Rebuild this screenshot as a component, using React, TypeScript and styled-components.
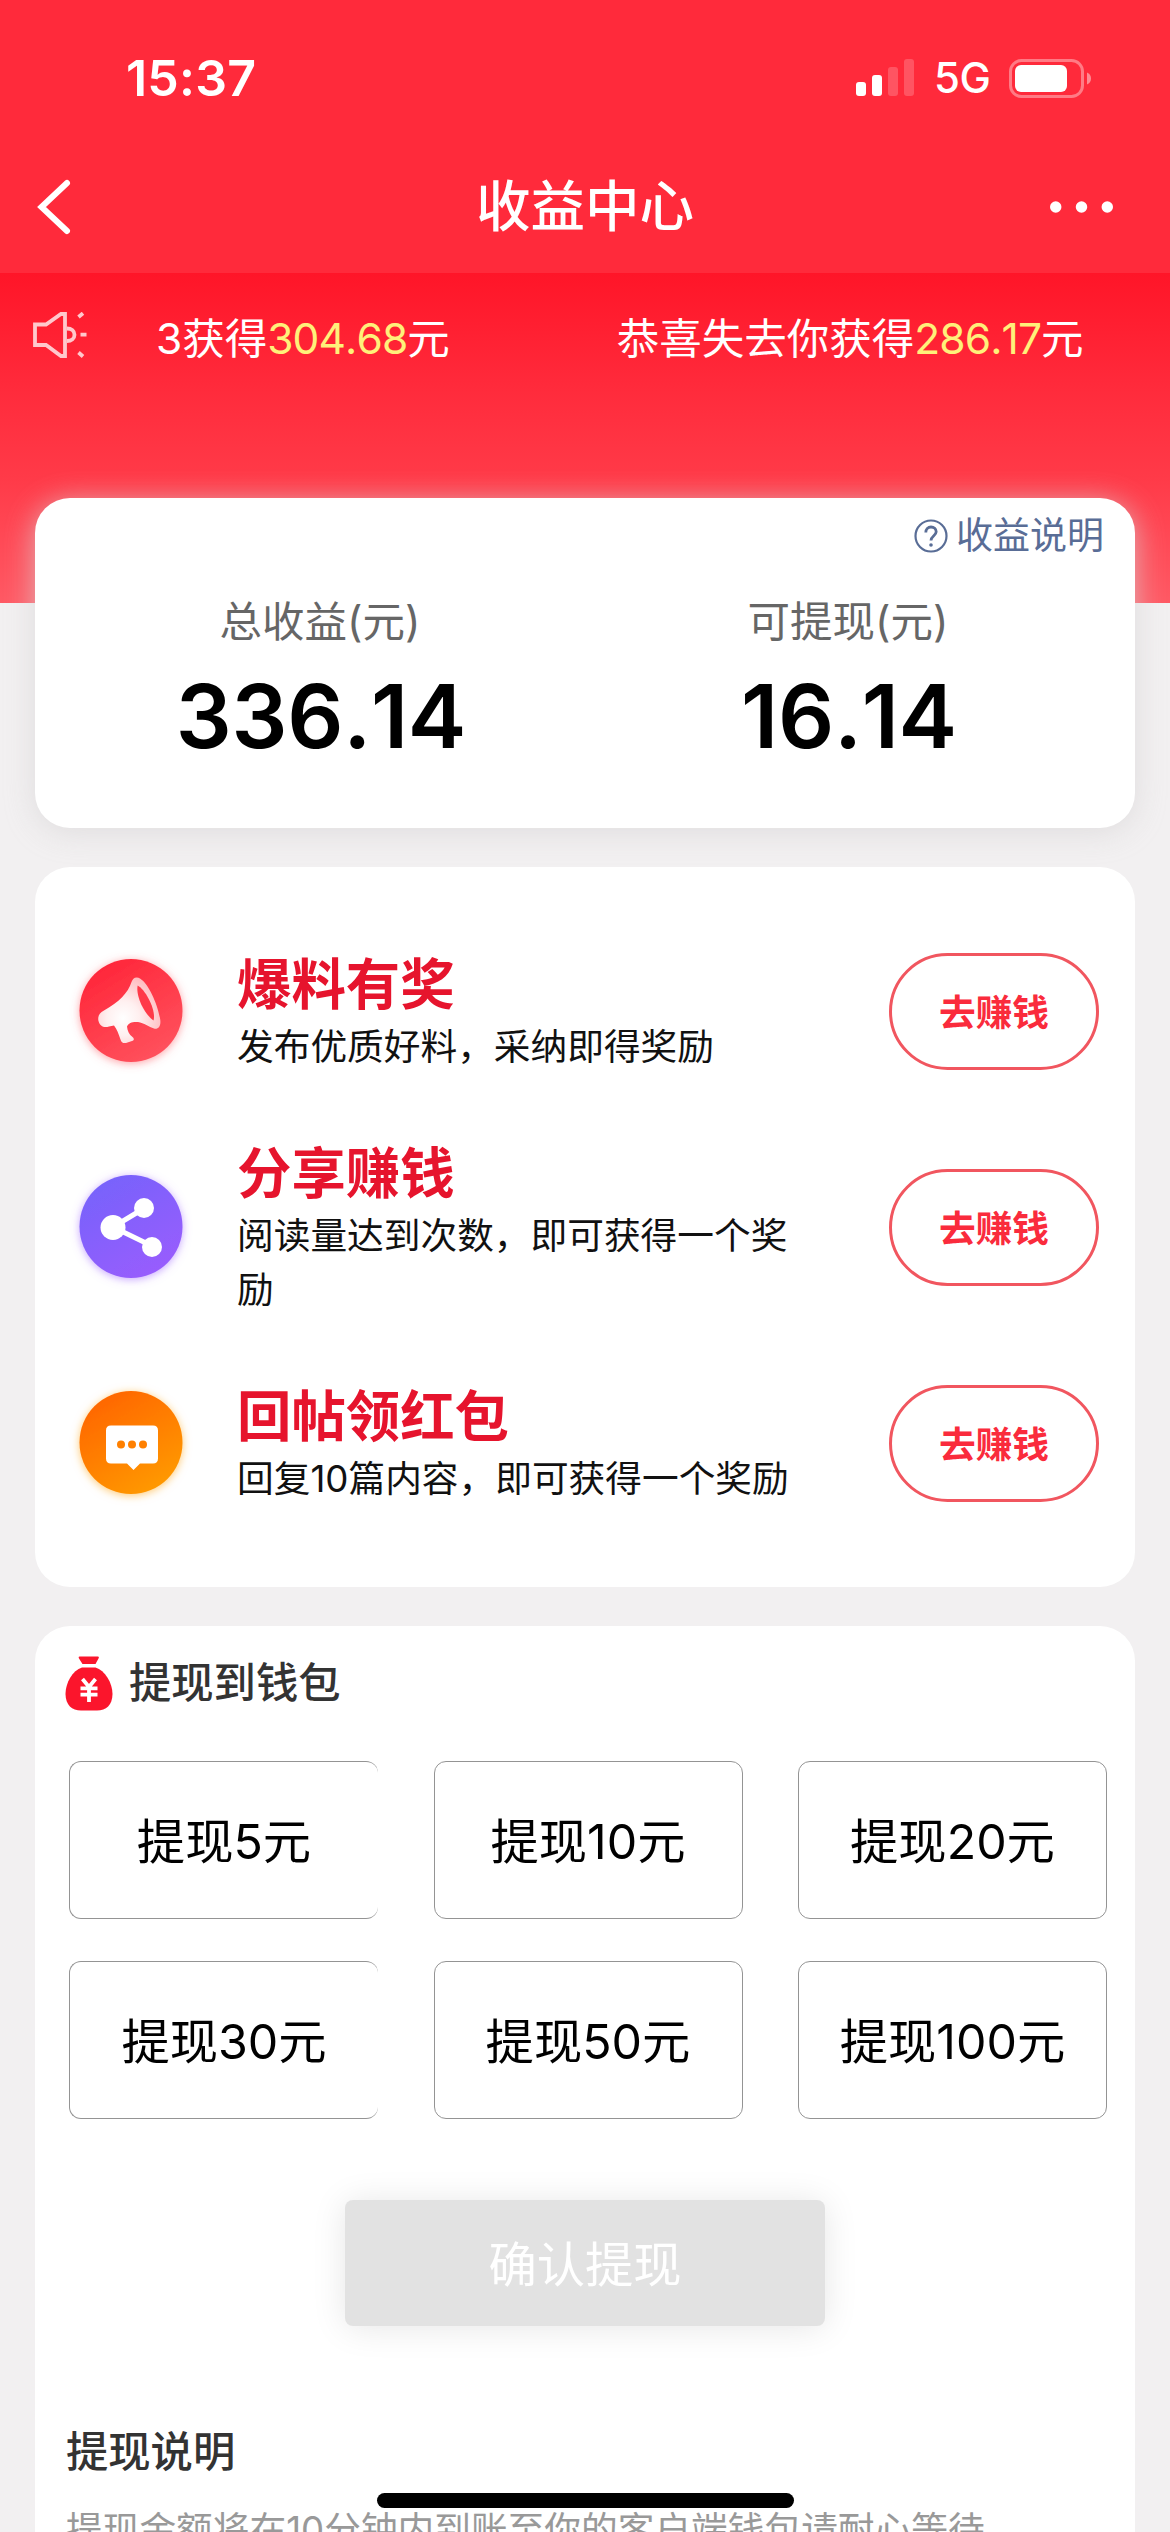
import React from "react";
import styled, { createGlobalStyle, css } from "styled-components";

const GlobalStyle = createGlobalStyle`
  html, body { margin: 0; padding: 0; }
  body { width: 1170px; height: 2532px; overflow: hidden; background: #f2f0f1; }
  * { box-sizing: border-box; }
  button { font: inherit; margin: 0; padding: 0; cursor: pointer; }
`;

const Screen = styled.div`
  position: relative;
  display: flex;
  flex-direction: column;
  width: 1170px;
  height: 2532px;
  overflow: hidden;
  background: #f2f0f1;
  font-family: Inter, "Noto Sans CJK SC", sans-serif;
  color: #000;
`;

const StatusBar = styled.header`
  display: flex;
  align-items: center;
  justify-content: space-between;
  height: 141px;
  padding: 15px 79px 0 126px;
  flex: none;
  background: #ff2a3b;
  color: #fff;
`;

const Clock = styled.time`
  font-size: 50px;
  font-weight: 600;
  line-height: 60px;
  letter-spacing: 0.2px;
`;

const StatusIcons = styled.div`
  display: flex;
  align-items: center;
`;

const Network = styled.span`
  width: 75px;
  padding-left: 19px;
  box-sizing: content-box;
  font-size: 42px;
  font-weight: 500;
  line-height: 60px;
  letter-spacing: -0.5px;
`;

const NavBar = styled.nav`
  display: grid;
  grid-template-columns: 120px 1fr 120px;
  align-items: center;
  height: 132px;
  flex: none;
  background: #ff2a3b;
  color: #fff;
`;

const IconButton = styled.button<{ $end?: boolean }>`
  display: flex;
  border: 0;
  background: none;
  justify-content: ${(p) => (p.$end ? "flex-end" : "flex-start")};
  padding: ${(p) => (p.$end ? "0 57px 0 0" : "0 0 0 36px")};
`;

const NavTitle = styled.h1`
  margin: 0 0 2px;
  font-size: 54.5px;
  font-weight: 500;
  line-height: 80px;
  text-align: center;
`;

const Banner = styled.section`
  height: 330px;
  flex: none;
  padding: 28px 0 0 32px;
  background: linear-gradient(180deg, #ff1528 0%, #ff2a3b 34%, #ff3a48 62%, #ff5964 100%);
  color: #fff;
`;

const Notice = styled.div`
  display: flex;
  align-items: center;
  height: 76px;
  font-size: 42.5px;
  line-height: 76px;
  white-space: nowrap;
  font-kerning: none;
`;

const NoticeIcon = styled.span`
  display: flex;
  margin-bottom: 9px;
`;

const NoticeItem = styled.span<{ $gap: number }>`
  margin-left: ${(p) => p.$gap}px;
`;

const Gold = styled.em`
  font-style: normal;
  color: #fff07a;
  letter-spacing: -0.9px;
`;

const Content = styled.main`
  display: flex;
  flex-direction: column;
  gap: 39px;
  margin-top: -105px;
  padding: 0 35px;
`;

const Card = styled.section`
  flex: none;
  border-radius: 35px;
  background: #fff;
`;

const SummaryCard = styled(Card)`
  display: flex;
  flex-direction: column;
  height: 330px;
  box-shadow: 0 4px 30px rgba(216, 213, 215, 0.75);
`;

const HelpLink = styled.a`
  display: flex;
  align-items: center;
  align-self: flex-end;
  gap: 8px;
  height: 76px;
  padding: 0 31px 0 0;
  color: #596d96;
  font-size: 37px;
  line-height: 56px;
`;

const Stats = styled.div`
  display: grid;
  grid-template-columns: 1fr 1fr;
  padding: 16px 23px 0 21px;
`;

const Stat = styled.div`
  display: flex;
  flex-direction: column;
  align-items: center;
`;

const StatLabel = styled.span`
  font-size: 42.5px;
  line-height: 64px;
  color: #666;
`;

const StatValue = styled.strong`
  padding-left: 2px;
  font-size: 88px;
  font-weight: 600;
  line-height: 106px;
  margin-top: 9px;
  letter-spacing: -0.3px;
  font-kerning: none;
`;

const TaskCard = styled(Card)`
  height: 720px;
  padding: 36px 36px 0 36px;
`;

const TaskRow = styled.article`
  display: flex;
  align-items: center;
  height: 216px;
`;

const TaskIcon = styled.svg`
  width: 120px;
  height: 120px;
  flex: none;
  overflow: visible;
`;

const TaskText = styled.div`
  width: 568px;
  margin-left: 46px;
`;

const TaskTitle = styled.h2`
  margin: 0;
  font-size: 54.4px;
  font-weight: 700;
  line-height: 70px;
  padding-bottom: 1px;
  color: #e6142d;
`;

const TaskDesc = styled.p`
  margin: 0;
  font-size: 36.7px;
  line-height: 54px;
  color: #111;
  word-break: break-all;
`;

const EarnButton = styled.button`
  width: 210px;
  height: 117px;
  margin-left: auto;
  padding-bottom: 2px;
  border: 3px solid #f1565f;
  border-radius: 59px;
  background: #fff;
  color: #fa2b3c;
  font-size: 36.7px;
  font-weight: 700;
`;

const WalletCard = styled(Card)`
  height: 1000px;
  padding: 24px 28px 0 30px;
`;

const SectionTitle = styled.h3`
  display: flex;
  align-items: center;
  gap: 16px;
  margin: 0;
  height: 66px;
  font-size: 42.3px;
  font-weight: 500;
  line-height: 66px;
  color: #333;
`;

const AmountGrid = styled.div`
  display: grid;
  grid-template-columns: repeat(3, 309px);
  justify-content: space-between;
  row-gap: 42px;
  padding-left: 4px;
  margin-top: 45px;
`;

const AmountButton = styled.button<{ $openRight: boolean }>`
  height: 158px;
  padding-bottom: 5px;
  border: 1px solid #949494;
  border-radius: 12px;
  background: #fff;
  color: #000;
  font-size: 48.3px;
  ${(p) =>
    p.$openRight &&
    css`
      border-right: 0;
    `}
`;

const ConfirmButton = styled.button`
  display: block;
  width: 480px;
  height: 126px;
  margin: 81px 0 0 280px;
  padding-bottom: 4px;
  border: 0;
  border-radius: 8px;
  background: #e2e2e2;
  box-shadow: 0 2px 34px rgba(0, 0, 0, 0.1);
  color: #fff;
  font-size: 48.3px;
`;

const RulesTitle = styled(SectionTitle)`
  margin: 93px 0 0 1px;
`;

const RulesText = styled.p`
  margin: 18px 0 0 1px;
  font-size: 36.7px;
  line-height: 54px;
  color: #999;
  white-space: nowrap;
`;

const HomeIndicator = styled.div`
  position: absolute;
  left: 377px;
  top: 2493px;
  width: 417px;
  height: 15px;
  border-radius: 8px;
  background: #000;
`;

const SignalIcon = () => (
  <svg width="59" height="38" viewBox="0 0 59 38" fill="#fff">
    <rect x="0" y="23" width="10" height="14" rx="3" />
    <rect x="16" y="16" width="10" height="21" rx="3" />
    <rect x="32" y="8" width="10" height="29" rx="3" opacity="0.2" />
    <rect x="48" y="0" width="10" height="37" rx="3" opacity="0.2" />
  </svg>
);

const BatteryIcon = () => (
  <svg width="82" height="39" viewBox="0 0 82 39">
    <rect x="1.5" y="1.5" width="72" height="36" rx="11" fill="none" stroke="#fff" strokeOpacity="0.38" strokeWidth="3" />
    <rect x="6" y="6" width="52" height="27" rx="6" fill="#fff" />
    <path d="M78 13.5c2.5 1 4 3.3 4 6s-1.5 5-4 6z" fill="#fff" opacity="0.45" />
  </svg>
);

const BackIcon = () => (
  <svg width="36" height="58" viewBox="0 0 36 58" fill="none" stroke="#fff" strokeWidth="6" strokeLinecap="round">
    <path d="M31 5L5.5 29 31 53" strokeLinejoin="miter" />
  </svg>
);

const MoreIcon = () => (
  <svg width="66" height="12" viewBox="0 0 66 12" fill="#fff">
    <circle cx="6" cy="6" r="6" />
    <circle cx="33" cy="6" r="6" />
    <circle cx="60" cy="6" r="6" />
  </svg>
);

const SpeakerIcon = () => (
  <svg width="56" height="46" viewBox="0 0 56 46" fill="none" stroke="#ffc8cc" strokeWidth="3.8">
    <path d="M3 12.5h11L29 2h4v42h-4L14 33H3z" />
    <path d="M35 16.5c4.5 0 7.5 2.7 7.5 6.3s-3 6.2-7.5 6.2" />
    <path d="M48.5 22.7h6M46.5 5l4.5-3.8M46.5 40.5l4.5 4" />
  </svg>
);

const HelpIcon = () => (
  <svg width="34" height="34" viewBox="0 0 34 34" fill="none" stroke="#596d96" strokeWidth="2.2">
    <circle cx="17" cy="17" r="15.5" />
    <path d="M11.8 13.5c0-3.4 2.3-5.5 5.2-5.5s5.2 2 5.2 4.8c0 3.7-5.2 4.2-5.2 8.7" strokeWidth="2.8" />
    <circle cx="17" cy="26" r="1.8" fill="#596d96" stroke="none" />
  </svg>
);

const MoneyBagIcon = () => (
  <svg width="48" height="55" viewBox="0 0 48 55">
    <path d="M14 2.5C13 .8 14 .5 16 .5h15.5c2 0 3 .3 2 2L30.5 8h-13z" fill="#fb152c" />
    <path d="M17 11.5h13.500C40 14.5 47.500 27 47.500 38c0 11-6.500 16.500-15.500 16.500H16C7 54.500.5 49 .5 38 .5 27 7.500 14.500 17 11.500z" fill="#fb152c" />
    <path d="M17.5 23l6.5 8 6.5-8M15.5 32.3h17M15.5 38.7h17M24 31v15" fill="none" stroke="#fff" strokeWidth="3.8" />
  </svg>
);

type TaskKind = "tip" | "share" | "reply";

const palette: Record<TaskKind, [string, string]> = {
  tip: ["#ff2438", "#ff545f"],
  share: ["#7663fb", "#9a5cfd"],
  reply: ["#ff6400", "#ff9c00"],
};

const glyphs: Record<TaskKind, React.ReactNode> = {
  tip: (
    <>
      <path
        d="M65.7 26.5C63 26.5 61.5 28.5 60.5 31C57 42 48 51 33 59.5C28 62 26.5 66 27.5 70C29 75.5 33 77 38 75.5L43 74.5C46 78 47.5 83 49.5 88.5C50.5 91.5 52 92.5 55 92L61 90C63.5 89 63.2 87.5 61.5 86C58 83.5 56.5 80 56 75.5C57.5 71.5 62 70.5 67 71C73 72 78 76 83 77.5C87.5 78.5 90 75 89.3 69C87 54 78 33 69 27.5C68 26.8 67 26.5 65.7 26.5Z"
        fill="url(#horn)"
      />
      <path d="M66.7 34.5C64.5 43 72 62 82.5 69.5C85.5 60 75 39 66.7 34.5Z" fill="#ff3a49" />
    </>
  ),
  share: (
    <>
      <path d="M72 42L42 60l39 19" fill="none" stroke="#fff" strokeWidth="5" />
      <circle cx="42" cy="60.5" r="12.5" fill="#fff" />
      <circle cx="73" cy="41" r="10" fill="#fff" />
      <circle cx="81" cy="80" r="10" fill="#fff" />
    </>
  ),
  reply: (
    <>
      <path
        d="M40 42.5h42c3.3 0 5 1.7 5 5v28c0 3.3-1.7 5-5 5H69l-6.5 6.5-6.5-6.5H40c-3.3 0-5-1.7-5-5v-28c0-3.3 1.7-5 5-5z"
        fill="#fff"
      />
      <circle cx="50" cy="61.5" r="4" fill="#ff8000" />
      <circle cx="61" cy="61.5" r="4" fill="#ff8000" />
      <circle cx="72" cy="61.5" r="4" fill="#ff8000" />
    </>
  ),
};

const TaskBadge = ({ kind }: { kind: TaskKind }) => (
  <TaskIcon viewBox="0 0 120 120">
    <defs>
      <linearGradient id={`fill-${kind}`} x1="0.2" y1="0" x2="0.8" y2="1">
        <stop offset="0" stopColor={palette[kind][0]} />
        <stop offset="1" stopColor={palette[kind][1]} />
      </linearGradient>
      <radialGradient id="horn" cx="0.4" cy="0.62" r="0.65">
        <stop offset="0" stopColor="#fff" />
        <stop offset="0.4" stopColor="#fff0f0" />
        <stop offset="1" stopColor="#ffbcc0" />
      </radialGradient>
      <filter id={`glow-${kind}`} x="-30%" y="-30%" width="160%" height="160%">
        <feDropShadow dx="0" dy="1.5" stdDeviation="4.5" floodColor={palette[kind][1]} floodOpacity="0.55" />
      </filter>
    </defs>
    <circle cx="60" cy="59.5" r="51.5" fill={`url(#fill-${kind})`} filter={`url(#glow-${kind})`} />
    {glyphs[kind]}
  </TaskIcon>
);

const tasks: { kind: TaskKind; title: string; desc: string }[] = [
  { kind: "tip", title: "爆料有奖", desc: "发布优质好料，采纳即得奖励" },
  { kind: "share", title: "分享赚钱", desc: "阅读量达到次数，即可获得一个奖励" },
  { kind: "reply", title: "回帖领红包", desc: "回复10篇内容，即可获得一个奖励" },
];

const amounts = [5, 10, 20, 30, 50, 100];

export default function App() {
  return (
    <Screen lang="zh-CN">
      <GlobalStyle />
      <StatusBar>
        <Clock>15:37</Clock>
        <StatusIcons>
          <SignalIcon />
          <Network>5G</Network>
          <BatteryIcon />
        </StatusIcons>
      </StatusBar>
      <NavBar>
        <IconButton aria-label="返回">
          <BackIcon />
        </IconButton>
        <NavTitle>收益中心</NavTitle>
        <IconButton $end aria-label="更多">
          <MoreIcon />
        </IconButton>
      </NavBar>
      <Banner>
        <Notice>
          <NoticeIcon>
            <SpeakerIcon />
          </NoticeIcon>
          <NoticeItem $gap={68}>
            3获得<Gold>304.68</Gold>元
          </NoticeItem>
          <NoticeItem $gap={167}>
            恭喜失去你获得<Gold>286.17</Gold>元
          </NoticeItem>
        </Notice>
      </Banner>
      <Content>
        <SummaryCard>
          <HelpLink>
            <HelpIcon />
            收益说明
          </HelpLink>
          <Stats>
            <Stat>
              <StatLabel>总收益(元)</StatLabel>
              <StatValue>336.14</StatValue>
            </Stat>
            <Stat>
              <StatLabel>可提现(元)</StatLabel>
              <StatValue>16.14</StatValue>
            </Stat>
          </Stats>
        </SummaryCard>
        <TaskCard>
          {tasks.map((task) => (
            <TaskRow key={task.kind}>
              <TaskBadge kind={task.kind} />
              <TaskText>
                <TaskTitle>{task.title}</TaskTitle>
                <TaskDesc>{task.desc}</TaskDesc>
              </TaskText>
              <EarnButton>去赚钱</EarnButton>
            </TaskRow>
          ))}
        </TaskCard>
        <WalletCard>
          <SectionTitle>
            <MoneyBagIcon />
            提现到钱包
          </SectionTitle>
          <AmountGrid>
            {amounts.map((amount, i) => (
              <AmountButton key={amount} $openRight={i % 3 === 0}>
                提现{amount}元
              </AmountButton>
            ))}
          </AmountGrid>
          <ConfirmButton>确认提现</ConfirmButton>
          <RulesTitle>提现说明</RulesTitle>
          <RulesText>提现金额将在10分钟内到账至你的客户端钱包请耐心等待</RulesText>
        </WalletCard>
      </Content>
      <HomeIndicator />
    </Screen>
  );
}
